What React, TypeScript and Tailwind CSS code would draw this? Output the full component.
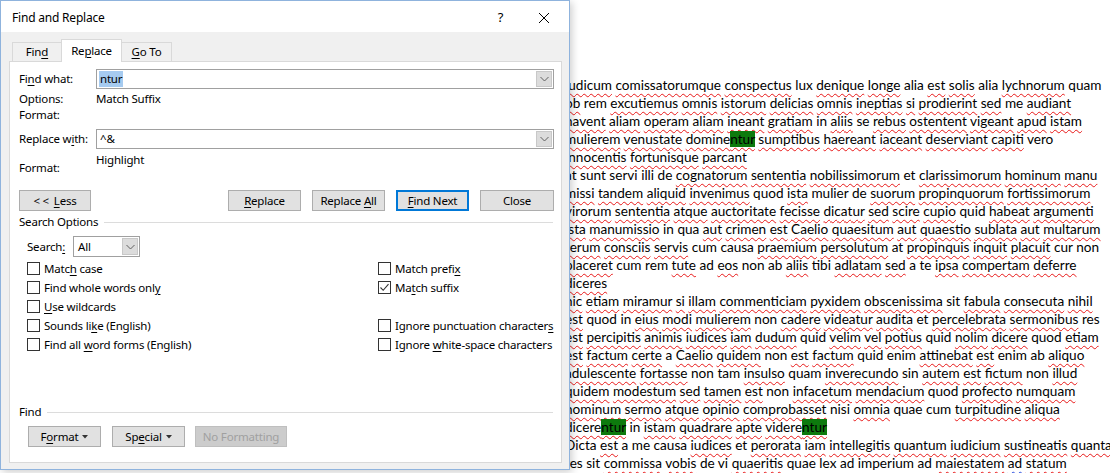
import React from "react";

const docLines: string[] = [
  "iudicum comissatorumque conspectus lux denique longe alia est solis alia lychnorum quam",
  "ob rem excutiemus omnis istorum delicias omnis ineptias si prodierint sed me audiant",
  "havent aliam operam aliam ineant gratiam in aliis se rebus ostentent vigeant apud istam",
  "mulierem venustate dominentur sumptibus haereant iaceant deserviant capiti vero",
  "innocentis fortunisque parcant",
  "at sunt servi illi de cognatorum sententia nobilissimorum et clarissimorum hominum manu",
  "missi tandem aliquid invenimus quod ista mulier de suorum propinquorum fortissimorum",
  "virorum sententia atque auctoritate fecisse dicatur sed scire cupio quid habeat argumenti",
  "ista manumissio in qua aut crimen est Caelio quaesitum aut quaestio sublata aut multarum",
  "rerum consciis servis cum causa praemium persolutum at propinquis inquit placuit cur non",
  "placeret cum rem tute ad eos non ab aliis tibi adlatam sed a te ipsa compertam deferre",
  "diceres",
  "hic etiam miramur si illam commenticiam pyxidem obscenissima sit fabula consecuta nihil",
  "est quod in eius modi mulierem non cadere videatur audita et percelebrata sermonibus res",
  "est percipitis animis iudices iam dudum quid velim vel potius quid nolim dicere quod etiam",
  "est factum certe a Caelio quidem non est factum quid enim attinebat est enim ab aliquo",
  "adulescente fortasse non tam insulso quam inverecundo sin autem est fictum non illud",
  "quidem modestum sed tamen est non infacetum mendacium quod profecto numquam",
  "hominum sermo atque opinio comprobasset nisi omnia quae cum turpitudine aliqua",
  "dicerentur in istam quadrare apte viderentur",
  "Dicta est a me causa iudices et perorata iam intellegitis quantum iudicium sustineatis quanta",
  "res sit commissa vobis de vi quaeritis quae lex ad imperium ad maiestatem ad statum",
];

const plain = new Set([
  "rem", "lux", "alia", "me", "in", "se", "de", "a", "non", "ab", "ad", "cum", "quod", "quid",
  "causa", "tibi", "et", "sit", "vi", "quae", "lex", "imperium", "res", "Dicta", "nisi", "te",
  "qua", "servi", "illi", "sunt", "at", "quam", "vero", "mulier", "sin", "enim", "cur", "tam",
]);

function DocLine({ text, li }: { text: string; li: number }) {
  const words = text.split(" ");
  let adCount = 0;
  return (
    <div className="h-[18px] whitespace-nowrap">
      {words.map((w, i) => {
        let blue = false;
        if (li === 21 && w === "ad") {
          adCount++;
          if (adCount === 3) blue = true;
        }
        const under = blue || !plain.has(w);
        const cls = blue
          ? "underline decoration-wavy decoration-[#2b4fe0] decoration-1 underline-offset-[3px]"
          : under
          ? "underline decoration-wavy decoration-[#e81818] decoration-1 underline-offset-[3px]"
          : "";
        let content: React.ReactNode = w;
        if (w.endsWith("ntur")) {
          content = (
            <>
              {w.slice(0, -4)}
              <span className="bg-[#0d7a0d]">ntur</span>
            </>
          );
        }
        return (
          <React.Fragment key={i}>
            <span className={cls}>{content}</span>
            {i < words.length - 1 ? " " : ""}
          </React.Fragment>
        );
      })}
    </div>
  );
}

function U({ children }: { children: React.ReactNode }) {
  return <span className="underline underline-offset-[2px] decoration-1">{children}</span>;
}

function Chevron() {
  return (
    <svg width="9" height="6" viewBox="0 0 9 6" className="block">
      <path d="M0.5 1 L4.5 5 L8.5 1" fill="none" stroke="#606060" strokeWidth="1" />
    </svg>
  );
}

function Combo({ children, className }: { children: React.ReactNode; className: string }) {
  return (
    <div className={"flex border border-[#a0a0a0] bg-white " + className}>
      <div className="flex-1 flex items-center pl-[2px] overflow-hidden">{children}</div>
      <div className="w-[16px] m-px bg-[#dcdcdc] border border-[#c8c8c8] flex items-center justify-center">
        <Chevron />
      </div>
    </div>
  );
}

function Btn({
  children,
  className = "",
  focused = false,
  disabled = false,
}: {
  children: React.ReactNode;
  className?: string;
  focused?: boolean;
  disabled?: boolean;
}) {
  const base = "h-[21px] flex items-center justify-center whitespace-nowrap ";
  const look = disabled
    ? "bg-[#cccccc] border border-[#bfbfbf] text-[#a0a0a0]"
    : focused
    ? "bg-[#e1e1e1] border-2 border-[#0078d7] text-black"
    : "bg-[#e1e1e1] border border-[#adadad] text-black";
  return (
    <div className={base + look + " " + className}>
      <span>{children}</span>
    </div>
  );
}

function Check({ checked = false }: { checked?: boolean }) {
  return (
    <div className="w-[13px] h-[13px] border border-[#333333] bg-white flex items-center justify-center shrink-0">
      {checked && (
        <svg width="11" height="11" viewBox="0 0 11 11" className="block">
          <path d="M1.5 5.5 L4.2 8.3 L9.5 2.2" fill="none" stroke="#333333" strokeWidth="1.1" />
        </svg>
      )}
    </div>
  );
}

function CheckRow({ label, checked = false }: { label: React.ReactNode; checked?: boolean }) {
  return (
    <div className="h-[19px] flex items-center gap-[4px] whitespace-nowrap">
      <Check checked={checked} />
      <span>{label}</span>
    </div>
  );
}

function Caret() {
  return (
    <svg width="6" height="4" viewBox="0 0 6 4" className="inline-block ml-[4px] mb-[1px]">
      <path d="M0 0 L6 0 L3 3.5 Z" fill="#333333" />
    </svg>
  );
}

function GroupTitle({ children }: { children: React.ReactNode }) {
  return (
    <div className="h-[16px] flex items-center pl-[9px] pr-[8px]">
      <span className="pr-[6px]">{children}</span>
      <div className="flex-1 h-px bg-[#dcdcdc]" />
    </div>
  );
}

export default function App() {
  return (
    <div className="relative w-[1110px] h-[473px] bg-white overflow-hidden">
      {/* Document behind */}
      <div className="pl-[565px] pt-[76px] font-['Lato',sans-serif] text-[13.6px] leading-[18px] text-black">
        {docLines.map((l, i) => (
          <DocLine key={i} text={l} li={i} />
        ))}
      </div>

      {/* Dialog window */}
      <div className="absolute left-0 top-0 w-[570px] h-[470px] bg-[#f0f0f0] border border-[#8fb3dd] flex flex-col font-['Noto_Sans',sans-serif] text-[11.5px] tracking-[-0.2px] leading-[16px] text-black shadow-[2px_2px_8px_rgba(0,0,0,0.2)]">
        {/* Title bar */}
        <div className="h-[31px] bg-white flex items-center pl-[11px] shrink-0">
          <span className="text-[12px] pt-[2px]">Find and Replace</span>
          <div className="ml-auto flex pr-[4px] h-full">
            <div className="w-[43px] h-full flex items-center justify-center text-[13px] pt-[1px]">?</div>
            <div className="w-[43px] h-full flex items-center justify-center pt-[2px]">
              <svg width="12" height="12" viewBox="0 0 12 12" className="block">
                <path d="M1 1 L11 11 M11 1 L1 11" stroke="#000" strokeWidth="1" />
              </svg>
            </div>
          </div>
        </div>

        {/* Tabs */}
        <div className="h-[29px] flex items-end pl-[11px] shrink-0">
          <div className="w-[49px] h-[19px] bg-[#f0f0f0] border-l border-t border-[#d9d9d9] flex items-center justify-center">
            <span>
              Fin<U>d</U>
            </span>
          </div>
          <div className="relative z-10 w-[61px] h-[23px] -mb-px bg-white border-l border-r border-t border-[#d9d9d9] flex items-start justify-center pt-[3px]">
            <span>
              Re<U>p</U>lace
            </span>
          </div>
          <div className="w-[50px] h-[19px] bg-[#f0f0f0] border-r border-t border-[#d9d9d9] flex items-center justify-center">
            <span>
              <U>G</U>o To
            </span>
          </div>
        </div>

        {/* Panel */}
        <div className="ml-[8px] w-[553px] h-[402px] border border-[#d9d9d9] bg-white flex flex-col shrink-0">
          {/* Find what */}
          <div className="mt-[7px] flex items-center pl-[9px] pr-[7px]">
            <div className="w-[77px]">
              Fi<U>n</U>d what:
            </div>
            <Combo className="flex-1 h-[20px]">
              <span className="bg-[#a6cbf0] px-px">ntur</span>
            </Combo>
          </div>
          <div className="mt-[2px] flex pl-[9px]">
            <div className="w-[77px]">Options:</div>
            <div>Match Suffix</div>
          </div>
          <div className="flex pl-[9px]">
            <div className="w-[77px]">Format:</div>
          </div>

          {/* Replace with */}
          <div className="mt-[6px] flex items-center pl-[9px] pr-[7px]">
            <div className="w-[77px]">
              Replace w<U>i</U>th:
            </div>
            <Combo className="flex-1 h-[20px]">
              <span className="pl-px">^&amp;</span>
            </Combo>
          </div>
          <div className="mt-[3px] flex pl-[9px] h-[24px]">
            <div className="w-[77px] pt-[8px]">Format:</div>
            <div>Highlight</div>
          </div>

          {/* Buttons */}
          <div className="mt-[14px] flex pl-[9px] pr-[7px]">
            <Btn className="w-[72px]">
              &lt; &lt; <span className="ml-[2px]"><U>L</U>ess</span>
            </Btn>
            <div className="ml-auto flex gap-[11px]">
              <Btn className="w-[73px]">
                <U>R</U>eplace
              </Btn>
              <Btn className="w-[73px]">
                Replace <U>A</U>ll
              </Btn>
              <Btn className="w-[73px]" focused>
                <U>F</U>ind Next
              </Btn>
              <Btn className="w-[74px]">Close</Btn>
            </div>
          </div>

          {/* Search Options */}
          <div className="mt-[3px]">
            <GroupTitle>Search Options</GroupTitle>
          </div>
          <div className="mt-[6px] flex items-center pl-[17px]">
            <div className="w-[46px]">
              Search<U>:</U>
            </div>
            <Combo className="w-[67px] h-[21px]">
              <span className="pl-[2px]">All</span>
            </Combo>
          </div>
          <div className="mt-[2px] flex pl-[17px]">
            <div className="w-[351px] flex flex-col">
              <CheckRow label={<>Matc<U>h</U> case</>} />
              <CheckRow label={<>Find whole words onl<U>y</U></>} />
              <CheckRow label={<><U>U</U>se wildcards</>} />
              <CheckRow label={<>Sounds li<U>k</U>e (English)</>} />
              <CheckRow label={<>Find all <U>w</U>ord forms (English)</>} />
            </div>
            <div className="flex flex-col">
              <CheckRow label={<>Match prefi<U>x</U></>} />
              <CheckRow checked label={<>Ma<U>t</U>ch suffix</>} />
              <div className="h-[19px]" />
              <CheckRow label={<>Ignore punctuation character<U>s</U></>} />
              <CheckRow label={<>Ignore <U>w</U>hite-space characters</>} />
            </div>
          </div>

          {/* Find group */}
          <div className="mt-[50px]">
            <GroupTitle>Find</GroupTitle>
          </div>
          <div className="mt-[6px] flex pl-[18px] gap-[11px]">
            <Btn className="w-[73px]">
              F<U>o</U>rmat
              <Caret />
            </Btn>
            <Btn className="w-[73px]">
              Sp<U>e</U>cial
              <Caret />
            </Btn>
            <Btn className="w-[92px] -ml-px" disabled>
              No Formatting
            </Btn>
          </div>
        </div>
      </div>
    </div>
  );
}
